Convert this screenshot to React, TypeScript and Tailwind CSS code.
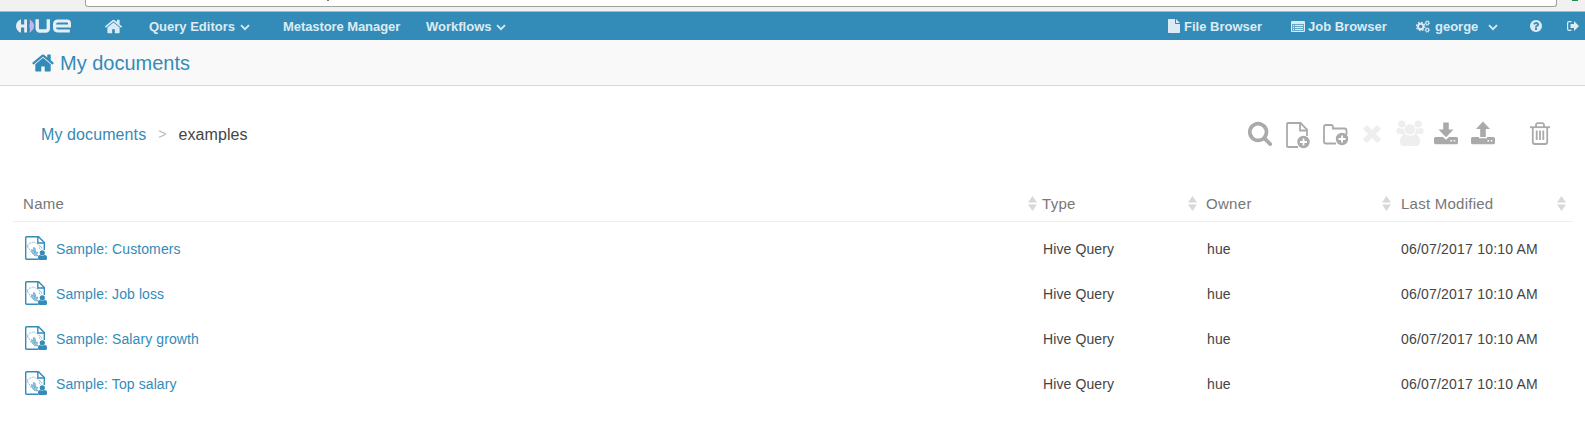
import React from "react";

const HOME =
  "M1472 992v480q0 26-19 45t-45 19h-384v-384h-256v384h-384q-26 0-45-19t-19-45v-480q0-1 .5-3t.5-3l575-474 575 474q1 2 1 6zm223-69l-62 74q-8 9-21 11h-3q-13 0-21-7l-692-577-692 577q-12 8-24 7-13-2-21-11l-62-74q-8-10-7-23.5t11-21.5l719-599q32-26 76-26t76 26l244 204v-195q0-14 9-23t23-9h192q14 0 23 9t9 23v408l219 182q10 8 11 21.5t-7 23.5z";
const SEARCH =
  "M1216 832q0-185-131.5-316.5t-316.5-131.5-316.5 131.5-131.5 316.5 131.5 316.5 316.5 131.5 316.5-131.5 131.5-316.5zm512 832q0 52-38 90t-90 38q-54 0-90-38l-343-342q-179 124-399 124-143 0-273.5-55.5t-225-150-150-225-55.5-273.5 55.5-273.5 150-225 225-150 273.5-55.5 273.5 55.5 225 150 150 225 55.5 273.5q0 220-124 399l343 343q37 37 37 90z";
const TIMES =
  "M1490 1322q0 40-28 68l-136 136q-28 28-68 28t-68-28l-294-294-294 294q-28 28-68 28t-68-28l-136-136q-28-28-28-68t28-68l294-294-294-294q-28-28-28-68t28-68l136-136q28-28 68-28t68 28l294 294 294-294q28-28 68-28t68 28l136 136q28 28 28 68t-28 68l-294 294 294 294q28 28 28 68z";
const HELP =
  "M1024 1376v-192q0-14-9-23t-23-9h-192q-14 0-23 9t-9 23v192q0 14 9 23t23 9h192q14 0 23-9t9-23zm256-672q0-88-55.5-163t-138.5-116-170-41q-243 0-371 213-15 24 8 42l132 100q7 6 19 6 16 0 25-12 53-68 86-92 34-24 86-24 48 0 85.5 26t37.5 59q0 38-20 61t-68 45q-63 28-115.5 86.5t-52.5 125.5v36q0 14 9 23t23 9h192q14 0 23-9t9-23q0-19 21.5-49.5t54.5-49.5q32-18 49-28.5t46-35 44.5-48 28-60.5 12.5-81zm384 192q0 209-103 385.5t-279.5 279.5-385.5 103-385.5-103-279.5-279.5-103-385.5 103-385.5 279.5-279.5 385.5-103 385.5 103 279.5 279.5 103 385.5z";

function Glyph({ d, className }: { d: string; className: string }) {
  return (
    <svg viewBox="0 0 1792 1792" fill="currentColor" className={`shrink-0 ${className}`}>
      <path d={d} />
    </svg>
  );
}

function Logo() {
  return (
    <svg viewBox="0 0 56 16" className="h-4 w-14 shrink-0" fill="none">
      <path d="M5 1.200C1.800 2.400 0 5 0 8s1.800 5.600 5 6.800V9.600H8.200V14.500H11V1.500H8.200V6.400H5z" fill="#e6eef3" />
      <path d="M13 1.300c3 1.400 5 3.600 5 6.700s-2 5.300-5 6.700c1.200-2 1.300-3.700.5-5.200V6.500c.8-1.500.7-3.200-.5-5.200z" fill="#c5b5ea" />
      <path d="M21.200 1.300v9q0 2.700 2.700 2.700h5.700q2.700 0 2.700-2.700v-9" stroke="#e6eef3" strokeWidth="3.400" />
      <path d="M38.500 7.900h15V5.300q0-2.300-2.300-2.300h-9.200q-3.500 0-3.500 3.500v3q0 3.500 3.500 3.500h11.800" stroke="#e6eef3" strokeWidth="3" />
    </svg>
  );
}

function Chevron() {
  return (
    <svg viewBox="0 0 10 7" className="mt-[2px] h-[7px] w-[10px] shrink-0" fill="none" stroke="currentColor" strokeWidth="1.800">
      <path d="M1 1.200l4 4 4-4" />
    </svg>
  );
}

function FileIcon() {
  return (
    <svg viewBox="0 0 12 14" className="h-[14px] w-3 shrink-0" fill="currentColor">
      <path d="M0 .7Q0 0 .7 0H7v4.300q0 .7.7.7H12v8.300q0 .7-.7.700H.7Q0 14 0 13.300zM8 0l4 4H8z" />
    </svg>
  );
}

function ListIcon() {
  return (
    <svg viewBox="0 0 14 11" className="h-[11px] w-[14px] shrink-0" fill="currentColor">
      <path fillRule="evenodd" d="M1 0h12q1 0 1 1v9q0 1-1 1H1q-1 0-1-1V1q0-1 1-1zM1 3v7h12V3z" />
      <path d="M1 3h12v7H1z" opacity=".3" />
      <path d="M2 4h1v1H2zm0 2h1v1H2zm0 2h1v1H2zm2-4h8v1H4zm0 2h8v1H4zm0 2h8v1H4z" />
    </svg>
  );
}

function Cogs() {
  return (
    <svg viewBox="0 0 14 13" className="h-[13px] w-[14px] shrink-0" fill="none" stroke="currentColor">
      <circle cx="4.700" cy="6.500" r="2.700" strokeWidth="1.900" />
      <circle cx="4.700" cy="6.500" r="4.200" strokeWidth="1.200" strokeDasharray="1.650 1.650" />
      <circle cx="11.300" cy="3" r="1.500" strokeWidth="1.200" />
      <circle cx="11.300" cy="3" r="2.300" strokeWidth=".9" strokeDasharray=".9 .9" />
      <circle cx="11.300" cy="10" r="1.500" strokeWidth="1.200" />
      <circle cx="11.300" cy="10" r="2.300" strokeWidth=".9" strokeDasharray=".9 .9" />
    </svg>
  );
}

function SignOut() {
  return (
    <svg viewBox="0 0 12 10" className="h-[10px] w-3 shrink-0" fill="currentColor">
      <path d="M4.500 0v1.200H2.200Q1.200 1.200 1.200 2.200v5.600q0 1 1 1h2.300V10H2Q0 10 0 8V2Q0 0 2 0z" />
      <path d="M7 0L12 5 7 10V7H3.500V3H7z" />
    </svg>
  );
}

function NewFile() {
  return (
    <svg viewBox="0 0 24 27" className="h-[27px] w-6 shrink-0" fill="none" stroke="currentColor" strokeWidth="1.800">
      <path d="M12 25H2q-1 0-1-1V2q0-1 1-1h12.500L21 7.500V14" />
      <path d="M14 1v7.500h7" />
      <circle cx="17.500" cy="20" r="6.200" fill="currentColor" stroke="none" />
      <path d="M17.500 16.500v7M14 20h7" stroke="#fff" />
    </svg>
  );
}

function NewFolder() {
  return (
    <svg viewBox="0 0 26 22" className="h-[22px] w-[26px] shrink-0" fill="none" stroke="currentColor" strokeWidth="1.800">
      <path d="M13 19.500H3q-2 0-2-2V3q0-2 2-2h5q2 0 2 2v1.500h11.500q2 0 2 2V11" />
      <circle cx="19" cy="15" r="6.200" fill="currentColor" stroke="none" />
      <path d="M19 11.500v7M15.500 15h7" stroke="#fff" />
    </svg>
  );
}

function Users() {
  return (
    <svg viewBox="0 0 28 26" className="h-[26px] w-7 shrink-0" fill="currentColor">
      <circle cx="5.800" cy="4" r="3.600" />
      <circle cx="22.200" cy="4" r="3.600" />
      <path d="M2.500 7.500q3.200 2 5.500.8-.5 3.500 1.300 5.700H3Q.3 14 .3 11.600q0-3 2.200-4.100zM25.500 7.500q-3.200 2-5.500.8.500 3.500-1.300 5.700H25q2.700 0 2.700-2.400 0-3-2.200-4.100z" />
      <circle cx="14" cy="9.300" r="5.300" />
      <path d="M8.800 14q5.200 3.600 10.400 0Q23.800 14.500 24 22q0 4-4 4H8q-4 0-4-4 .2-7.500 4.800-8z" />
    </svg>
  );
}

function Drive({ up = false }: { up?: boolean }) {
  return (
    <svg viewBox="0 0 24 24" className="h-6 w-6 shrink-0" fill="currentColor">
      {up ? <path d="M12 .5l7 7.500h-4.200v8H9.200V8H5z" /> : <path d="M9.200 1.500h5.600V8.500H19.500L12 16.300 4.500 8.500h4.700z" />}
      {up ? (
        <path fillRule="evenodd" d="M1.500 16H8v1.200h8V16h6.500q1.500 0 1.500 1.500v4.300q0 1.500-1.500 1.500h-21Q0 23.300 0 21.800v-4.300Q0 16 1.500 16zm15 3v1.500H18V19zm3.200 0v1.500h1.500V19z" />
      ) : (
        <path fillRule="evenodd" d="M1.500 16H8.800L12 18.800 15.200 16h7.300q1.500 0 1.500 1.500v4.300q0 1.500-1.500 1.500h-21Q0 23.300 0 21.800v-4.300Q0 16 1.500 16zm15 3v1.500H18V19zm3.200 0v1.500h1.500V19z" />
      )}
    </svg>
  );
}

function Trash() {
  return (
    <svg viewBox="0 0 20 23" className="h-[23px] w-5 shrink-0" fill="none" stroke="currentColor" strokeWidth="1.800">
      <path d="M0 5.200h20" />
      <path d="M6 5V3.500Q6 1.200 8 1.200h4q2 0 2 2.300V5M2.800 5v15q0 2 2 2h10.400q2 0 2-2V5M6.700 8.500v9.500M10 8.500v9.500M13.300 8.500v9.500" />
    </svg>
  );
}

function QueryDoc() {
  return (
    <svg viewBox="0 0 22 24" className="h-6 w-[22px] shrink-0" fill="none" stroke="#338bb8">
      <path d="M13 23.300H1.700Q.7 23.300.7 22.300V1.700Q.7.700 1.700.7H13.500L19.300 6.500V14" strokeWidth="1.400" />
      <path d="M12.800.7V7h6.500" strokeWidth="1.400" />
      <path d="M2.500 10Q3 7.500 5 7q1.500.3 2.300-.8Q9.500 5.500 11 7.500q2 .2 3 2M2.500 10q.3 2 1.500 2.500l1 2.500 2 1.500M14 9l2.500 2 .5 2.500M15.500 10l-1.500 2 1.500 1.500" strokeWidth=".9" strokeDasharray="2 .8" opacity=".6" />
      <path d="M8.500 11.500l-.3 3-1.700-1 .5 3.500 2.500 2.500 3.500.5-1-1.500.5-2.500-1.500.5-1-4.500zM9.200 14l.5 4" strokeWidth=".6" fill="#338bb8" fillOpacity=".55" opacity=".85" />
      <circle cx="17.300" cy="16.800" r="2.600" fill="#338bb8" stroke="none" />
      <path d="M15 19q2.300 1.500 4.600 0Q22 19 22 21v1.500q0 1.500-1.500 1.500h-6Q13 24 13 22.500V21q0-2 2-2z" fill="#338bb8" stroke="none" />
    </svg>
  );
}

function Sort() {
  return (
    <svg viewBox="0 0 9 15" className="h-[15px] w-[9px] shrink-0" fill="#d8d8d8">
      <path d="M4.500 0L9 6.500H0zM0 8.500h9L4.500 15z" />
    </svg>
  );
}

const COLS = "grid grid-cols-[1029px_164px_195px_172px]";
const ROWS = ["Sample: Customers", "Sample: Job loss", "Sample: Salary growth", "Sample: Top salary"];

export default function App() {
  return (
    <div className="h-[422px] w-[1585px] overflow-hidden bg-white font-['Liberation_Sans',Arial,sans-serif] text-[#444]">
      <div className="flex h-3 items-start justify-between border-b border-[#b5b5b5] bg-[#f1f1f1] pl-[85px]">
        <div className="flex h-[7px] w-[1472px] items-start rounded-b-[3px] border border-t-0 border-[#a0a0a0] bg-white pl-[241px]">
          <span className="h-px w-[2px] bg-[#8a7060]" />
        </div>
        <span className="mr-[7px] h-px w-[6px] bg-[#1c9150]" />
      </div>

      <nav className="flex h-7 items-center bg-[#338bb8] pl-4 text-[13px] font-bold text-[#dcebf3]">
        <Logo />
        <Glyph d={HOME} className="ml-[32px] h-[19px] w-[19px]" />
        <span className="ml-[26px] w-[87px] whitespace-nowrap pt-px">Query Editors</span>
        <span className="ml-[4px]"><Chevron /></span>
        <span className="ml-[33px] w-[118px] whitespace-nowrap pt-px tracking-[-0.08px]">Metastore Manager</span>
        <span className="ml-[25px] w-[65px] whitespace-nowrap pt-px">Workflows</span>
        <span className="ml-[5px]"><Chevron /></span>
        <div className="ml-auto flex items-center">
          <FileIcon />
          <span className="ml-1 w-[79px] whitespace-nowrap pt-px">File Browser</span>
          <span className="ml-[28px]"><ListIcon /></span>
          <span className="ml-[3px] w-[80px] whitespace-nowrap pt-px">Job Browser</span>
          <span className="ml-[28px]"><Cogs /></span>
          <span className="ml-[5px] w-[44px] whitespace-nowrap pt-px">george</span>
          <span className="ml-[9px]"><Chevron /></span>
          <Glyph d={HELP} className="ml-[31px] h-[14px] w-[14px]" />
          <span className="ml-[24px] mr-[6px]"><SignOut /></span>
        </div>
      </nav>

      <header className="flex h-[46px] items-center border-b border-[#d8d8d8] bg-[#f9f9f9] pl-[31px] text-[20px] text-[#338bb8]">
        <Glyph d={HOME} className="h-6 w-6" />
        <h1 className="ml-[5px]">My documents</h1>
      </header>

      <div className="flex h-[96px] items-center pl-[41px] text-[16px]">
        <a className="pt-[2px] tracking-[0.1px] text-[#338bb8]">My documents</a>
        <span className="ml-3 text-[14px] text-[#bbb]">&gt;</span>
        <span className="ml-[12px] pt-[2px] tracking-[0.1px]">examples</span>
        <div className="ml-auto flex h-[27px] items-center text-[#aaa]">
          <Glyph d={SEARCH} className="mb-[2px] h-[26px] w-[26px]" />
          <span className="ml-[13px] pt-[2px]"><NewFile /></span>
          <span className="ml-[13px] pt-[2px]"><NewFolder /></span>
          <Glyph d={TIMES} className="mb-[2px] ml-[10px] h-[26px] w-[26px] text-[#eee]" />
          <span className="mb-[2px] ml-[11px] text-[#eee]"><Users /></span>
          <span className="mb-[2px] ml-[10px]"><Drive /></span>
          <span className="mb-[2px] ml-[13px]"><Drive up /></span>
          <span className="mb-[2px] ml-[35px] mr-[35px]"><Trash /></span>
        </div>
      </div>

      <main className="pl-[13px]">
        <div className={`${COLS} h-[40px] w-[1560px] border-b border-[#eee] pt-1 text-[15px] tracking-[0.3px] text-[#777]`}>
          <div className="flex items-center pl-[10px] pr-[5px]"><span className="grow pt-[2px]">Name</span><Sort /></div>
          <div className="flex items-center pr-[9px]"><span className="grow pt-[2px]">Type</span><Sort /></div>
          <div className="flex items-center pr-[10px]"><span className="grow pt-[2px]">Owner</span><Sort /></div>
          <div className="flex items-center pr-[7px]"><span className="grow pt-[2px] tracking-[0.25px]">Last Modified</span><Sort /></div>
        </div>
        <div className="pt-1">
          {ROWS.map((name) => (
            <div key={name} className={`${COLS} h-[45px] items-center text-[14px] tracking-[0.1px]`}>
              <div className="flex items-center pl-3">
                <span className="mb-[2px]"><QueryDoc /></span>
                <a className="ml-[9px] pt-px text-[#338bb8]">{name}</a>
              </div>
              <span className="pl-px pt-px">Hive Query</span>
              <span className="pl-px pt-px">hue</span>
              <span className="pt-px tracking-[0.2px]">06/07/2017 10:10 AM</span>
            </div>
          ))}
        </div>
      </main>
    </div>
  );
}
